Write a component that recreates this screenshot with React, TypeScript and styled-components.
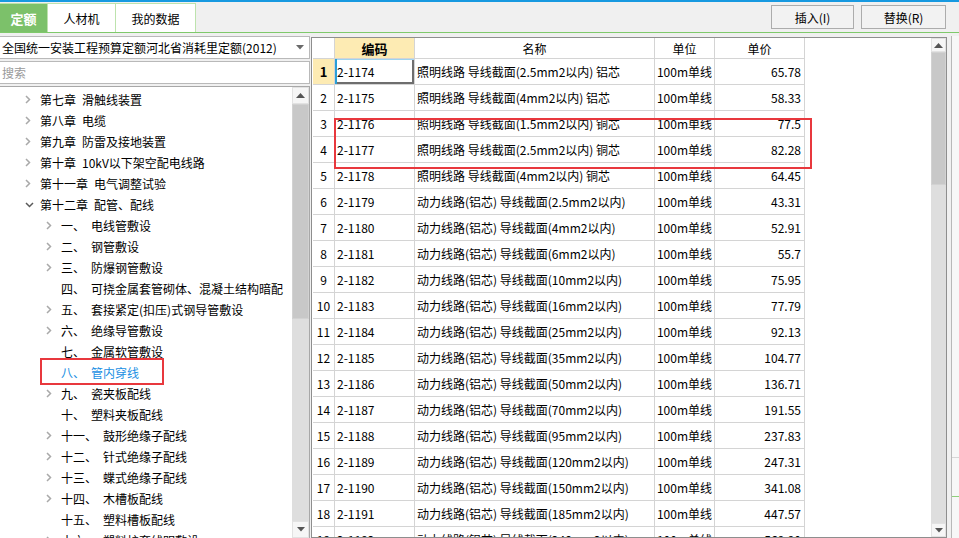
import React from "react";
import styled, { createGlobalStyle } from "styled-components";

const FONT = `"Noto Sans CJK SC", "Noto Sans", "DejaVu Sans", sans-serif`;

const GlobalStyle = createGlobalStyle`
  html, body { margin: 0; padding: 0; background: #f0f0f0; }
  body { font-family: ${FONT}; font-size: 12px; color: #000; overflow: hidden; }
  * { box-sizing: border-box; }
`;

const Page = styled.div`
  width: 959px;
  height: 538px;
  display: flex;
  flex-direction: column;
  overflow: hidden;
  background: #f0f0f0;
`;

/* ---------- top bar ---------- */
const TopBar = styled.header`
  flex: none;
  height: 33px;
  border-top: 2px solid #1799e0;
  border-bottom: 1px solid #7fc96b;
  display: flex;
  justify-content: space-between;
  padding-right: 13px;
`;

const TabStrip = styled.nav`
  display: flex;
  align-self: flex-end;
`;

const Tab = styled.div<{ $active?: boolean; $w: number }>`
  width: ${(p) => p.$w}px;
  height: 29px;
  display: flex;
  align-items: center;
  justify-content: center;
  border: 1px solid #bde3ad;
  border-bottom: none;
  border-left: ${(p) => (p.$active ? "none" : "1px solid #bde3ad")};
  margin-left: ${(p) => (p.$active ? "0" : "-1px")};
  background: ${(p) => (p.$active ? "#7cc16a" : "#ffffff")};
  color: ${(p) => (p.$active ? "#ffffff" : "#000000")};
  font-weight: ${(p) => (p.$active ? 700 : 400)};
  font-size: ${(p) => (p.$active ? "13px" : "12px")};
  &:first-child { margin-left: 0; }
`;

const ButtonGroup = styled.div`
  display: flex;
  align-items: center;
  gap: 7px;
`;

const ActionButton = styled.button<{ $w: number }>`
  width: ${(p) => p.$w}px;
  height: 24px;
  border: 1px solid #acacac;
  background: #f2f2f2;
  font-family: ${FONT};
  font-size: 12px;
  color: #000;
  padding: 0;
`;

/* ---------- main ---------- */
const Main = styled.main`
  flex: 1;
  min-height: 0;
  display: flex;
  padding-top: 3px;
`;

const LeftPanel = styled.section`
  width: 311px;
  margin-left: -1px;
  display: flex;
  flex-direction: column;
  gap: 2px;
  flex: none;
`;

const SelectBox = styled.div`
  height: 23px;
  border: 1px solid #b9b9b9;
  background: #fff;
  display: flex;
  align-items: center;
  justify-content: space-between;
  padding: 0 5px 0 2px;
  white-space: nowrap;
`;

const SearchInput = styled.input`
  height: 23px;
  border: 1px solid #b9b9b9;
  background: #fff;
  font-family: ${FONT};
  font-size: 12px;
  padding: 0 2px;
  outline: none;
  &::placeholder { color: #9a9a9a; }
`;

const TreeBox = styled.div`
  flex: 1;
  min-height: 0;
  display: flex;
  border: 1px solid #a8a8a8;
  border-bottom: none;
  background: #fff;
  overflow: hidden;
`;

const TreeBody = styled.div`
  flex: 1;
  padding-top: 2px;
  overflow: hidden;
`;

const TreeRow = styled.div<{ $level: number; $selected?: boolean }>`
  position: relative;
  height: 21px;
  display: flex;
  align-items: center;
  padding-left: ${(p) => 24 + p.$level * 21}px;
  white-space: nowrap;
  color: ${(p) => (p.$selected ? "#1a8fe3" : "#000")};
  line-height: 21px;
`;

const ChevronSlot = styled.span`
  width: 16px;
  height: 21px;
  flex: none;
  display: flex;
  align-items: center;
  padding-left: 1px;
`;

const Prefix = styled.span``;
const Name = styled.span`
  margin-left: 6px;
`;

const Highlight = styled.div`
  position: absolute;
  left: 40px;
  top: -4px;
  width: 124px;
  height: 27px;
  border: 2px solid #e8383d;
  pointer-events: none;
`;

/* scrollbars */
const VScroll = styled.div<{ $w: number }>`
  width: ${(p) => p.$w}px;
  flex: none;
  display: flex;
  flex-direction: column;
  background: #dedede;
`;

const ScrollBtn = styled.div<{ $h: number }>`
  height: ${(p) => p.$h}px;
  flex: none;
  display: flex;
  align-items: center;
  justify-content: center;
  background: #f6f6f6;
  border: 1px solid #e2e2e2;
`;

const ScrollThumb = styled.div<{ $h: number }>`
  height: ${(p) => p.$h}px;
  flex: none;
  background: #c8c8c8;
  border: 1px solid #d2d2d2;
`;

const ScrollTrack = styled.div`
  flex: 1;
`;

/* ---------- grid ---------- */
const RightPanel = styled.section`
  flex: 1;
  min-width: 0;
  display: flex;
  margin-left: 1px;
`;

const GridFrame = styled.div`
  flex: 1;
  margin-top: 1px;
  display: flex;
  border: 1px solid #8e8e8e;
  background: #fff;
  overflow: hidden;
`;

const GridArea = styled.div`
  flex: 1;
  padding-left: 1px;
  overflow: hidden;
`;

const COLS = "22px 80px 240px 60px 90px";

const GridHeader = styled.div`
  display: grid;
  grid-template-columns: ${COLS};
  height: 21px;
`;

const HeadCell = styled.div<{ $hl?: boolean }>`
  display: flex;
  align-items: center;
  justify-content: center;
  border-right: 1px solid #d4d4d4;
  border-bottom: 1px solid #d4d4d4;
  background: ${(p) => (p.$hl ? "#fdebb3" : "#fff")};
  font-weight: ${(p) => (p.$hl ? 700 : 400)};
  font-size: ${(p) => (p.$hl ? "13px" : "12px")};
`;

const GridBody = styled.div`
  position: relative;
`;

const GridRow = styled.div`
  display: grid;
  grid-template-columns: ${COLS};
  height: 26px;
`;

const Cell = styled.div<{ $align?: "left" | "center" | "right"; $focus?: boolean; $pad?: number }>`
  display: flex;
  align-items: center;
  justify-content: ${(p) =>
    p.$align === "right" ? "flex-end" : p.$align === "center" ? "center" : "flex-start"};
  padding: 0 ${(p) => p.$pad ?? 3}px;
  border-right: 1px solid #d4d4d4;
  border-bottom: 1px solid #d4d4d4;
  white-space: nowrap;
  overflow: hidden;
  box-shadow: ${(p) =>
    p.$focus
      ? "inset 2px 0 0 #2a9fd8, inset 0 1px 0 #9fd3f0, inset -2px 0 0 #6e6e6e, inset 0 -2px 0 #6e6e6e"
      : "none"};
`;

const RowHead = styled.div<{ $hl?: boolean }>`
  display: flex;
  align-items: center;
  justify-content: center;
  border-right: 1px solid #d4d4d4;
  border-bottom: 1px solid #d4d4d4;
  background: ${(p) => (p.$hl ? "#fdebb3" : "#fff")};
  font-weight: ${(p) => (p.$hl ? 700 : 400)};
  font-size: ${(p) => (p.$hl ? "13px" : "12px")};
`;

const Annotation = styled.div`
  position: absolute;
  left: 21px;
  top: 59px;
  width: 478px;
  height: 51px;
  border: 2px solid #e8383d;
  pointer-events: none;
`;

const EdgeStrip = styled.aside`
  width: 12px;
  flex: none;
  display: flex;
  padding-left: 4px;
`;

const EdgePane = styled.div`
  flex: 1;
  border-left: 1px solid #b8b8b8;
  background: #f7f7f7;
  display: flex;
  flex-direction: column;
`;

const EdgeGap = styled.div<{ $h: number }>`
  height: ${(p) => p.$h}px;
  flex: none;
`;

const EdgeLine = styled.div<{ $c: string }>`
  height: 1px;
  background: ${(p) => p.$c};
`;

/* ---------- icons ---------- */
const ChevronRight = () => (
  <svg width="6" height="9" viewBox="0 0 6 9">
    <polyline points="1,1 4.5,4.5 1,8" fill="none" stroke="#a9a9a9" strokeWidth="1.5" />
  </svg>
);
const ChevronDown = () => (
  <svg width="9" height="6" viewBox="0 0 9 6">
    <polyline points="1,1 4.5,4.5 8,1" fill="none" stroke="#5a5a5a" strokeWidth="1.5" />
  </svg>
);
const TriDown = ({ color = "#6a6a6a" }: { color?: string }) => (
  <svg width="8" height="5" viewBox="0 0 8 5">
    <polygon points="0,0 8,0 4,4.5" fill={color} />
  </svg>
);
const TriUp = ({ color = "#555" }: { color?: string }) => (
  <svg width="9" height="5" viewBox="0 0 9 5">
    <polygon points="0,5 9,5 4.5,0" fill={color} />
  </svg>
);

/* ---------- data ---------- */
type TreeItem = {
  level: number;
  prefix: string;
  name: string;
  chevron: "right" | "down" | "none";
  selected?: boolean;
};

const tree: TreeItem[] = [
  { level: 0, prefix: "第七章", name: "滑触线装置", chevron: "right" },
  { level: 0, prefix: "第八章", name: "电缆", chevron: "right" },
  { level: 0, prefix: "第九章", name: "防雷及接地装置", chevron: "right" },
  { level: 0, prefix: "第十章", name: "10kV以下架空配电线路", chevron: "right" },
  { level: 0, prefix: "第十一章", name: "电气调整试验", chevron: "right" },
  { level: 0, prefix: "第十二章", name: "配管、配线", chevron: "down" },
  { level: 1, prefix: "一、", name: "电线管敷设", chevron: "right" },
  { level: 1, prefix: "二、", name: "钢管敷设", chevron: "right" },
  { level: 1, prefix: "三、", name: "防爆钢管敷设", chevron: "right" },
  { level: 1, prefix: "四、", name: "可挠金属套管砌体、混凝土结构暗配", chevron: "none" },
  { level: 1, prefix: "五、", name: "套接紧定(扣压)式钢导管敷设", chevron: "right" },
  { level: 1, prefix: "六、", name: "绝缘导管敷设", chevron: "right" },
  { level: 1, prefix: "七、", name: "金属软管敷设", chevron: "none" },
  { level: 1, prefix: "八、", name: "管内穿线", chevron: "none", selected: true },
  { level: 1, prefix: "九、", name: "瓷夹板配线", chevron: "right" },
  { level: 1, prefix: "十、", name: "塑料夹板配线", chevron: "none" },
  { level: 1, prefix: "十一、", name: "鼓形绝缘子配线", chevron: "right" },
  { level: 1, prefix: "十二、", name: "针式绝缘子配线", chevron: "right" },
  { level: 1, prefix: "十三、", name: "蝶式绝缘子配线", chevron: "right" },
  { level: 1, prefix: "十四、", name: "木槽板配线", chevron: "right" },
  { level: 1, prefix: "十五、", name: "塑料槽板配线", chevron: "none" },
  { level: 1, prefix: "十六、", name: "塑料护套线明敷设", chevron: "right" },
];

const light = (s: string, core: string) => `照明线路 导线截面(${s}以内) ${core}`;
const power = (s: string) => `动力线路(铝芯) 导线截面(${s}以内)`;

const rows: [string, string, string][] = [
  ["2-1174", light("2.5mm2", "铝芯"), "65.78"],
  ["2-1175", light("4mm2", "铝芯"), "58.33"],
  ["2-1176", light("1.5mm2", "铜芯"), "77.5"],
  ["2-1177", light("2.5mm2", "铜芯"), "82.28"],
  ["2-1178", light("4mm2", "铜芯"), "64.45"],
  ["2-1179", power("2.5mm2"), "43.31"],
  ["2-1180", power("4mm2"), "52.91"],
  ["2-1181", power("6mm2"), "55.7"],
  ["2-1182", power("10mm2"), "75.95"],
  ["2-1183", power("16mm2"), "77.79"],
  ["2-1184", power("25mm2"), "92.13"],
  ["2-1185", power("35mm2"), "104.77"],
  ["2-1186", power("50mm2"), "136.71"],
  ["2-1187", power("70mm2"), "191.55"],
  ["2-1188", power("95mm2"), "237.83"],
  ["2-1189", power("120mm2"), "247.31"],
  ["2-1190", power("150mm2"), "341.08"],
  ["2-1191", power("185mm2"), "447.57"],
  ["2-1192", power("240mm2"), "569.90"],
];

export default function App() {
  return (
    <Page>
      <GlobalStyle />
      <TopBar>
        <TabStrip>
          <Tab $active $w={48}>定额</Tab>
          <Tab $w={69}>人材机</Tab>
          <Tab $w={81}>我的数据</Tab>
        </TabStrip>
        <ButtonGroup>
          <ActionButton $w={83}>插入(I)</ActionButton>
          <ActionButton $w={85}>替换(R)</ActionButton>
        </ButtonGroup>
      </TopBar>

      <Main>
        <LeftPanel>
          <SelectBox>
            <span>全国统一安装工程预算定额河北省消耗里定额(2012)</span>
            <TriDown />
          </SelectBox>
          <SearchInput placeholder="搜索" readOnly />
          <TreeBox>
            <TreeBody>
              {tree.map((t, i) => (
                <TreeRow key={i} $level={t.level} $selected={t.selected}>
                  <ChevronSlot>
                    {t.chevron === "right" && <ChevronRight />}
                    {t.chevron === "down" && <ChevronDown />}
                  </ChevronSlot>
                  <Prefix>{t.prefix}</Prefix>
                  <Name>{t.name}</Name>
                  {t.selected && <Highlight />}
                </TreeRow>
              ))}
            </TreeBody>
            <VScroll $w={17}>
              <ScrollBtn $h={17}>
                <TriUp />
              </ScrollBtn>
              <ScrollThumb $h={215} />
              <ScrollTrack />
              <ScrollBtn $h={17}>
                <TriDown color="#555" />
              </ScrollBtn>
            </VScroll>
          </TreeBox>
        </LeftPanel>

        <RightPanel>
          <GridFrame>
            <GridArea>
              <GridHeader>
                <HeadCell />
                <HeadCell $hl>编码</HeadCell>
                <HeadCell>名称</HeadCell>
                <HeadCell>单位</HeadCell>
                <HeadCell>单价</HeadCell>
              </GridHeader>
              <GridBody>
                {rows.map(([code, name, price], i) => (
                  <GridRow key={code}>
                    <RowHead $hl={i === 0}>{i + 1}</RowHead>
                    <Cell $pad={2} $focus={i === 0}>{code}</Cell>
                    <Cell $pad={2}>{name}</Cell>
                    <Cell $align="center">100m单线</Cell>
                    <Cell $align="right">{price}</Cell>
                  </GridRow>
                ))}
                <Annotation />
              </GridBody>
            </GridArea>
            <VScroll $w={15}>
              <ScrollBtn $h={14}>
                <TriUp />
              </ScrollBtn>
              <ScrollThumb $h={133} />
              <ScrollTrack />
              <ScrollBtn $h={14}>
                <TriDown color="#555" />
              </ScrollBtn>
            </VScroll>
          </GridFrame>
          <EdgeStrip>
            <EdgePane>
              <EdgeGap $h={421} />
              <EdgeLine $c="#d6d6d6" />
              <EdgeGap $h={38} />
              <EdgeLine $c="#8fd07a" />
            </EdgePane>
          </EdgeStrip>
        </RightPanel>
      </Main>
    </Page>
  );
}
